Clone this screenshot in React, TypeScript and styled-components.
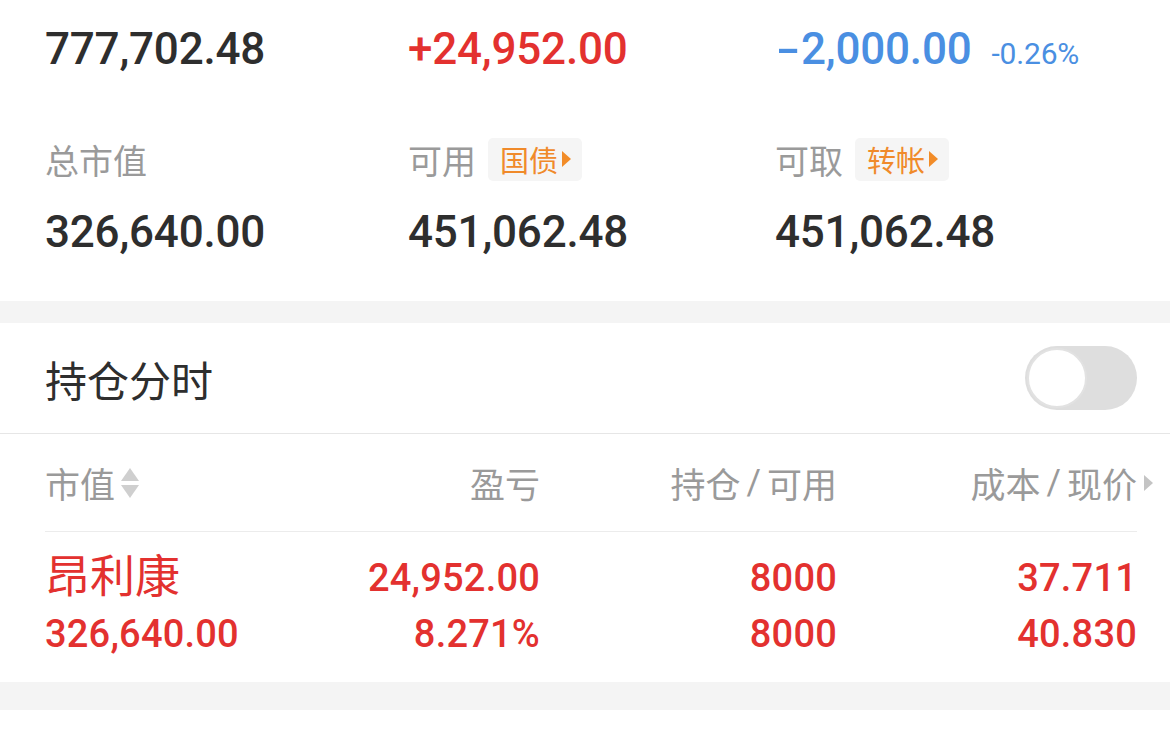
import styled, { createGlobalStyle } from 'styled-components';

const GlobalStyle = createGlobalStyle`
  html, body {
    margin: 0;
    padding: 0;
    background: #ffffff;
  }
  body {
    width: 1170px;
    height: 734px;
    overflow: hidden;
    font-family: Roboto, 'Noto Sans CJK SC', sans-serif;
  }
`;

const RED = '#e3312f';
const BLUE = '#4a8fe2';
const DARK = '#2e2e2e';
const GRAY = '#9a9a9a';

export default function App() {
  return (
    <>
      <GlobalStyle />
      <Page>
        <Summary>
          <Grid>
            <BigNum color={DARK}>777,702.48</BigNum>
            <BigNum color={RED}>+24,952.00</BigNum>
            <BigNum color={BLUE}>
              <Sign>-</Sign>2,000.00
              <Pct>-0.26%</Pct>
            </BigNum>
          </Grid>
          <LabelGrid>
            <Label>总市值</Label>
            <Label>
              可用
              <Badge>
                国债
                <Tri color="#f28c28" />
              </Badge>
            </Label>
            <Label>
              可取
              <Badge>
                转帐
                <Tri color="#f28c28" />
              </Badge>
            </Label>
          </LabelGrid>
          <Grid>
            <BigNum color={DARK}>326,640.00</BigNum>
            <BigNum color={DARK}>451,062.48</BigNum>
            <BigNum color={DARK}>451,062.48</BigNum>
          </Grid>
        </Summary>

        <Band height={22} />

        <Holdings>
          <TitleBar>
            <Title>持仓分时</Title>
            <Toggle>
              <Knob />
            </Toggle>
          </TitleBar>

          <Table>
            <HeadRow>
              <HeadCell align="left">
                市值
                <SortIcon />
              </HeadCell>
              <HeadCell align="right">盈亏</HeadCell>
              <HeadCell align="right">
                持仓<Slash>/</Slash>可用
              </HeadCell>
              <HeadCell align="right">
                成本<Slash>/</Slash>现价
                <ArrowBox>
                  <Tri color="#c4c4c4" />
                </ArrowBox>
              </HeadCell>
            </HeadRow>

            <DataRow>
              <Cell align="left">
                <Name>昂利康</Name>
                <Val>326,640.00</Val>
              </Cell>
              <Cell align="right">
                <Val>24,952.00</Val>
                <Val>8.271%</Val>
              </Cell>
              <Cell align="right">
                <Val>8000</Val>
                <Val>8000</Val>
              </Cell>
              <Cell align="right">
                <Val>37.711</Val>
                <Val>40.830</Val>
              </Cell>
            </DataRow>
          </Table>
        </Holdings>

        <Band height={28} />
      </Page>
    </>
  );
}

function Tri({ color }: { color: string }) {
  return (
    <svg width="11" height="18" viewBox="0 0 11 18">
      <path d="M1 1 L10 9 L1 17 Z" fill={color} />
    </svg>
  );
}

function SortIcon() {
  return (
    <svg width="22" height="34" viewBox="0 0 22 34" style={{ marginLeft: 4 }}>
      <path d="M11 2 L20 15 L2 15 Z" fill="#cfcfcf" />
      <path d="M2 19 L20 19 L11 32 Z" fill="#cfcfcf" />
    </svg>
  );
}

const Page = styled.div`
  display: flex;
  flex-direction: column;
  width: 1170px;
  background: #fff;
`;

const Summary = styled.section`
  display: flex;
  flex-direction: column;
  padding: 21px 0 41px 45px;
`;

const Grid = styled.div`
  display: grid;
  grid-template-columns: 363px 367px 1fr;
`;

const LabelGrid = styled(Grid)`
  margin: 55px 0 23px;
`;

const BigNum = styled.div<{ color: string }>`
  display: flex;
  align-items: baseline;
  font-size: 44px;
  line-height: 56px;
  font-weight: 500;
  color: ${(p) => p.color};
  letter-spacing: -0.2px;
`;

const Sign = styled.span`
  display: inline-block;
  width: 26px;
  text-align: center;
  transform: scaleX(1.6);
`;

const Pct = styled.span`
  font-size: 30px;
  font-weight: 400;
  margin-left: 20px;
`;

const Label = styled.div`
  display: flex;
  align-items: center;
  height: 44px;
  font-size: 34px;
  color: ${GRAY};
`;

const Badge = styled.span`
  display: inline-flex;
  align-items: center;
  gap: 3px;
  height: 43px;
  margin-left: 12px;
  padding: 0 10px 0 12px;
  border-radius: 5px;
  background: #f5f5f5;
  color: #f08a2a;
  font-size: 29px;
`;

const Band = styled.div<{ height: number }>`
  height: ${(p) => p.height}px;
  background: #f4f4f4;
`;

const Holdings = styled.section`
  display: flex;
  flex-direction: column;
`;

const TitleBar = styled.div`
  display: flex;
  align-items: center;
  justify-content: space-between;
  height: 110px;
  padding: 0 33px 0 45px;
  border-bottom: 1px solid #e6e6e6;
`;

const Title = styled.h2`
  margin: 0;
  font-size: 42px;
  font-weight: 400;
  color: ${DARK};
`;

const Toggle = styled.div`
  display: flex;
  align-items: center;
  width: 112px;
  height: 64px;
  border-radius: 32px;
  background: #dedede;
  box-sizing: border-box;
  padding: 2px;
`;

const Knob = styled.div`
  width: 60px;
  height: 60px;
  border-radius: 50%;
  background: #fff;
  box-sizing: border-box;
  border: 2px solid #e2e2e2;
`;

const Table = styled.div`
  display: flex;
  flex-direction: column;
  margin: 0 33px 0 45px;
`;

const cols = '200px 295px 297px 300px';

const HeadRow = styled.div`
  display: grid;
  grid-template-columns: ${cols};
  height: 97px;
  align-items: center;
  border-bottom: 1px solid #ececec;
`;

const HeadCell = styled.div<{ align: 'left' | 'right' }>`
  display: flex;
  align-items: center;
  justify-content: ${(p) => (p.align === 'left' ? 'flex-start' : 'flex-end')};
  font-size: 35px;
  color: ${GRAY};
  position: relative;
`;

const Slash = styled.span`
  margin: 0 6px;
`;

const ArrowBox = styled.span`
  position: absolute;
  right: -17px;
  top: 50%;
  transform: translateY(-50%);
  display: flex;
`;

const DataRow = styled.div`
  display: grid;
  grid-template-columns: ${cols};
  padding: 20px 0 22px;
  height: 108px;
`;

const Cell = styled.div<{ align: 'left' | 'right' }>`
  display: flex;
  flex-direction: column;
  align-items: ${(p) => (p.align === 'left' ? 'flex-start' : 'flex-end')};
  justify-content: space-between;
  color: ${RED};
`;

const Name = styled.div`
  font-size: 45px;
  line-height: 52px;
`;

const Val = styled.div`
  font-size: 38px;
  line-height: 52px;
  font-weight: 500;
  letter-spacing: 0.2px;
`;
